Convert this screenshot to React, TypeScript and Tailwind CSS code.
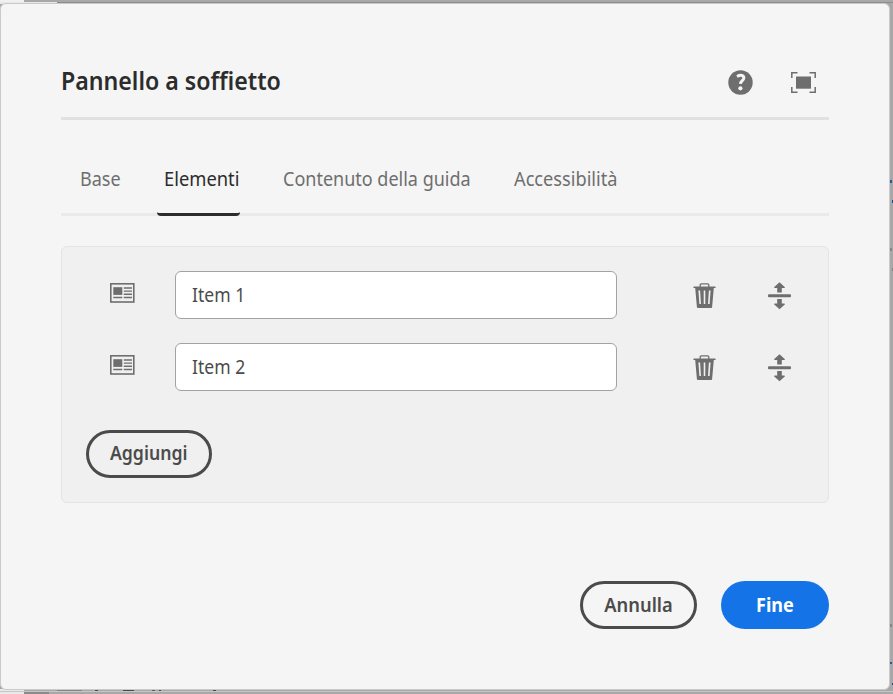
import React from "react";

function Help() {
  return (
    <svg width="25" height="25" viewBox="0 0 25 25">
      <circle cx="12.5" cy="12.5" r="12.2" fill="#6e6e6e" />
      <path d="M9 6.5C13 4.3 16.2 5.5 15.8 8.4C15.5 10.7 12.6 10.8 12.5 13.9" fill="none" stroke="#f5f5f5" strokeWidth="3" />
      <circle cx="12.4" cy="18.3" r="2.1" fill="#f5f5f5" />
    </svg>
  );
}

function Fullscreen() {
  return (
    <svg width="25" height="22" viewBox="0 0 25 22">
      <path d="M.8 6V.8H6.5M18.5.8H24.2V6M24.2 15V20.3H18.5M6.5 20.3H.8V15" fill="none" stroke="#6e6e6e" strokeWidth="1.5" />
      <rect x="5" y="4.5" width="15" height="12.2" fill="#6e6e6e" />
    </svg>
  );
}

function Article() {
  return (
    <svg width="25" height="20" viewBox="0 0 25 20">
      <rect x=".8" y=".8" width="23" height="18.2" fill="none" stroke="#6e6e6e" strokeWidth="1.6" />
      <rect x="3.3" y="4.2" width="9" height="7.7" fill="#6e6e6e" />
      <path d="M13.8 5H22M13.8 8.1H22M13.8 11.2H22M3.3 14.5H12.3M13.8 14.5H22" stroke="#6e6e6e" strokeWidth="1.4" />
    </svg>
  );
}

function Trash() {
  return (
    <svg width="23" height="25" viewBox="0 0 23 25">
      <path d="M7.2 4V2Q7.2.9 8.3.9H14.7Q15.8.9 15.8 2V4" fill="none" stroke="#6e6e6e" strokeWidth="1.3" />
      <path fill="#6e6e6e" fillRule="evenodd" d="M1 3.4H22Q22.7 3.4 22.7 4.3T22 5.1H20.8L19.1 24Q19 24.9 18.2 24.9H4.8Q4 24.9 3.9 24L2.2 5.1H1Q.3 5.1.3 4.3T1 3.4ZM5.4 7.5L6.4 21.1H8L7.1 7.5ZM10.7 7.5V21.1H12.3V7.5ZM15.9 7.5L15 21.1H16.6L17.6 7.5Z" />
    </svg>
  );
}

function Reorder() {
  return (
    <svg width="23" height="28" viewBox="0 0 23 28">
      <rect y="12.2" width="23" height="3" rx="1" fill="#6e6e6e" />
      <path d="M11.5.2L17 5.2Q17 6 16 6H13.8V10.5H9.2V6H7Q6 6 6 5.2ZM11.5 27.2L17 22.2Q17 21.4 16 21.4H13.8V16.9H9.2V21.4H7Q6 21.4 6 22.2Z" fill="#6e6e6e" />
    </svg>
  );
}

function Row({ label }: { label: string }) {
  return (
    <div className="flex h-12 items-center">
      <div className="-mt-1 ml-6 w-[65px]"><Article /></div>
      <div className="flex h-12 w-[442px] items-center rounded-md border border-[#a2a2a2] bg-white pl-4 text-[19.5px] text-[#4b4b4b]">
        <span className="inline-block origin-left scale-x-[0.9]">{label}</span>
      </div>
      <button className="ml-[76px]"><Trash /></button>
      <button className="ml-[52px] mt-[2px]"><Reorder /></button>
    </div>
  );
}

export default function App() {
  return (
    <div className="relative h-[694px] w-[893px] overflow-hidden bg-[#a8a8a8] pt-[3px] font-['Noto_Sans',sans-serif]">
      <div className="absolute left-0 top-0 h-[4px] w-[24px] bg-[#f0f0f0]" />
      <div className="absolute left-0 top-[2px] h-[2px] w-[57px] bg-[#e8e8e8]" />
      <div className="absolute left-[57px] top-[2px] h-px w-[836px] bg-[#8c8c8c]" />
      <div className="absolute bottom-0 left-0 h-[5px] w-[24px] bg-[#e9e9e9]" />
      <div className="absolute bottom-[2px] left-0 h-px w-[893px] bg-[#c6c6c6]" />
      <div className="absolute bottom-0 left-[24px] h-[2px] w-[25px] bg-[#8a8a8a]" />
      <div className="absolute bottom-[3px] left-[57px] h-px w-[25px] bg-[#858585]" />
      <div className="absolute bottom-[3px] left-[95px] h-px w-[3px] bg-[#484848]" />
      <div className="absolute bottom-[3px] left-[123px] h-px w-[11px] bg-[#484848]" />
      <div className="absolute bottom-[3px] left-[152px] h-px w-[3px] bg-[#65594b]" />
      <div className="absolute bottom-[3px] left-[159px] h-px w-[2px] bg-[#484848]" />
      <div className="absolute bottom-[3px] left-[213px] h-px w-[3px] bg-[#484848]" />
      <div className="absolute left-[890px] top-[180px] h-[3px] w-[2px] bg-[#1d5ba7]" />
      <div className="absolute left-[892px] top-[200px] h-[3px] w-px bg-[#244d85]" />
      <div className="absolute left-[890px] top-[248px] h-[3px] w-[2px] bg-[#858585]" />
      <div className="absolute left-[892px] top-[268px] h-[3px] w-px bg-[#858585]" />
      <div className="absolute left-[890px] top-[624px] h-[3px] w-[2px] bg-[#858585]" />
      <div className="absolute left-[890px] top-[662px] h-[2px] w-[2px] bg-[#1d5ba7]" />
      <div className="absolute left-[892px] top-[683px] h-[2px] w-px bg-[#244d85]" />

      <main className="relative h-[687px] w-[890px] rounded-md border border-[#cacaca] bg-[#f5f5f5] px-[60px]">
        <header className="flex h-[116px] items-end justify-between border-b-[3px] border-[#e1e1e1] pb-[19px]">
          <h1 className="mb-px text-[24.5px] font-semibold leading-[32px] text-[#2c2c2c]"><span className="inline-block origin-left scale-x-[0.945] whitespace-nowrap">Pannello a soffietto</span></h1>
          <div className="flex items-center gap-[38px] pr-[13px] pb-[3px]">
            <button><Help /></button>
            <button><Fullscreen /></button>
          </div>
        </header>
        <nav className="flex h-24 border-b-[3px] border-[#eaeaea] pt-[45px] text-[19.5px] leading-[28px] text-[#6e6e6e]">
          <div className="ml-[19px] w-[77px]"><span className="inline-block origin-left scale-x-[0.925]">Base</span></div>
          <div className="h-[51px] w-[83px] rounded-sm border-b-[3px] border-[#2c2c2c] pl-[7px] text-[#2c2c2c]"><span className="inline-block origin-left scale-x-[0.94]">Elementi</span></div>
          <div className="ml-[43px] w-[231px] whitespace-nowrap"><span className="inline-block origin-left scale-x-[0.923]">Contenuto della guida</span></div>
          <div><span className="inline-block origin-left scale-x-[0.933]">Accessibilità</span></div>
        </nav>
        <section className="mt-[30px] h-[257px] rounded-md border border-[#e4e4e4] bg-[#f0f0f0] px-6 pt-6">
          <div className="flex flex-col gap-6"><Row label="Item 1" /><Row label="Item 2" /></div>
          <button className="mt-[39px] flex h-12 w-[126px] items-center justify-center rounded-full border-[3px] border-[#4b4b4b] pb-[2px] text-[19px] font-semibold text-[#4b4b4b]"><span className="inline-block scale-x-[0.93]">Aggiungi</span></button>
        </section>
        <footer className="mt-[78px] flex justify-end gap-6 text-[19px] font-semibold">
          <button className="h-12 w-[117px] rounded-full border-[3px] border-[#4b4b4b] text-[#4b4b4b]"><span className="inline-block scale-x-[0.965]">Annulla</span></button>
          <button className="h-12 w-[108px] rounded-full bg-[#1473e6] font-bold text-white"><span className="inline-block scale-x-[0.95]">Fine</span></button>
        </footer>
      </main>
    </div>
  );
}
